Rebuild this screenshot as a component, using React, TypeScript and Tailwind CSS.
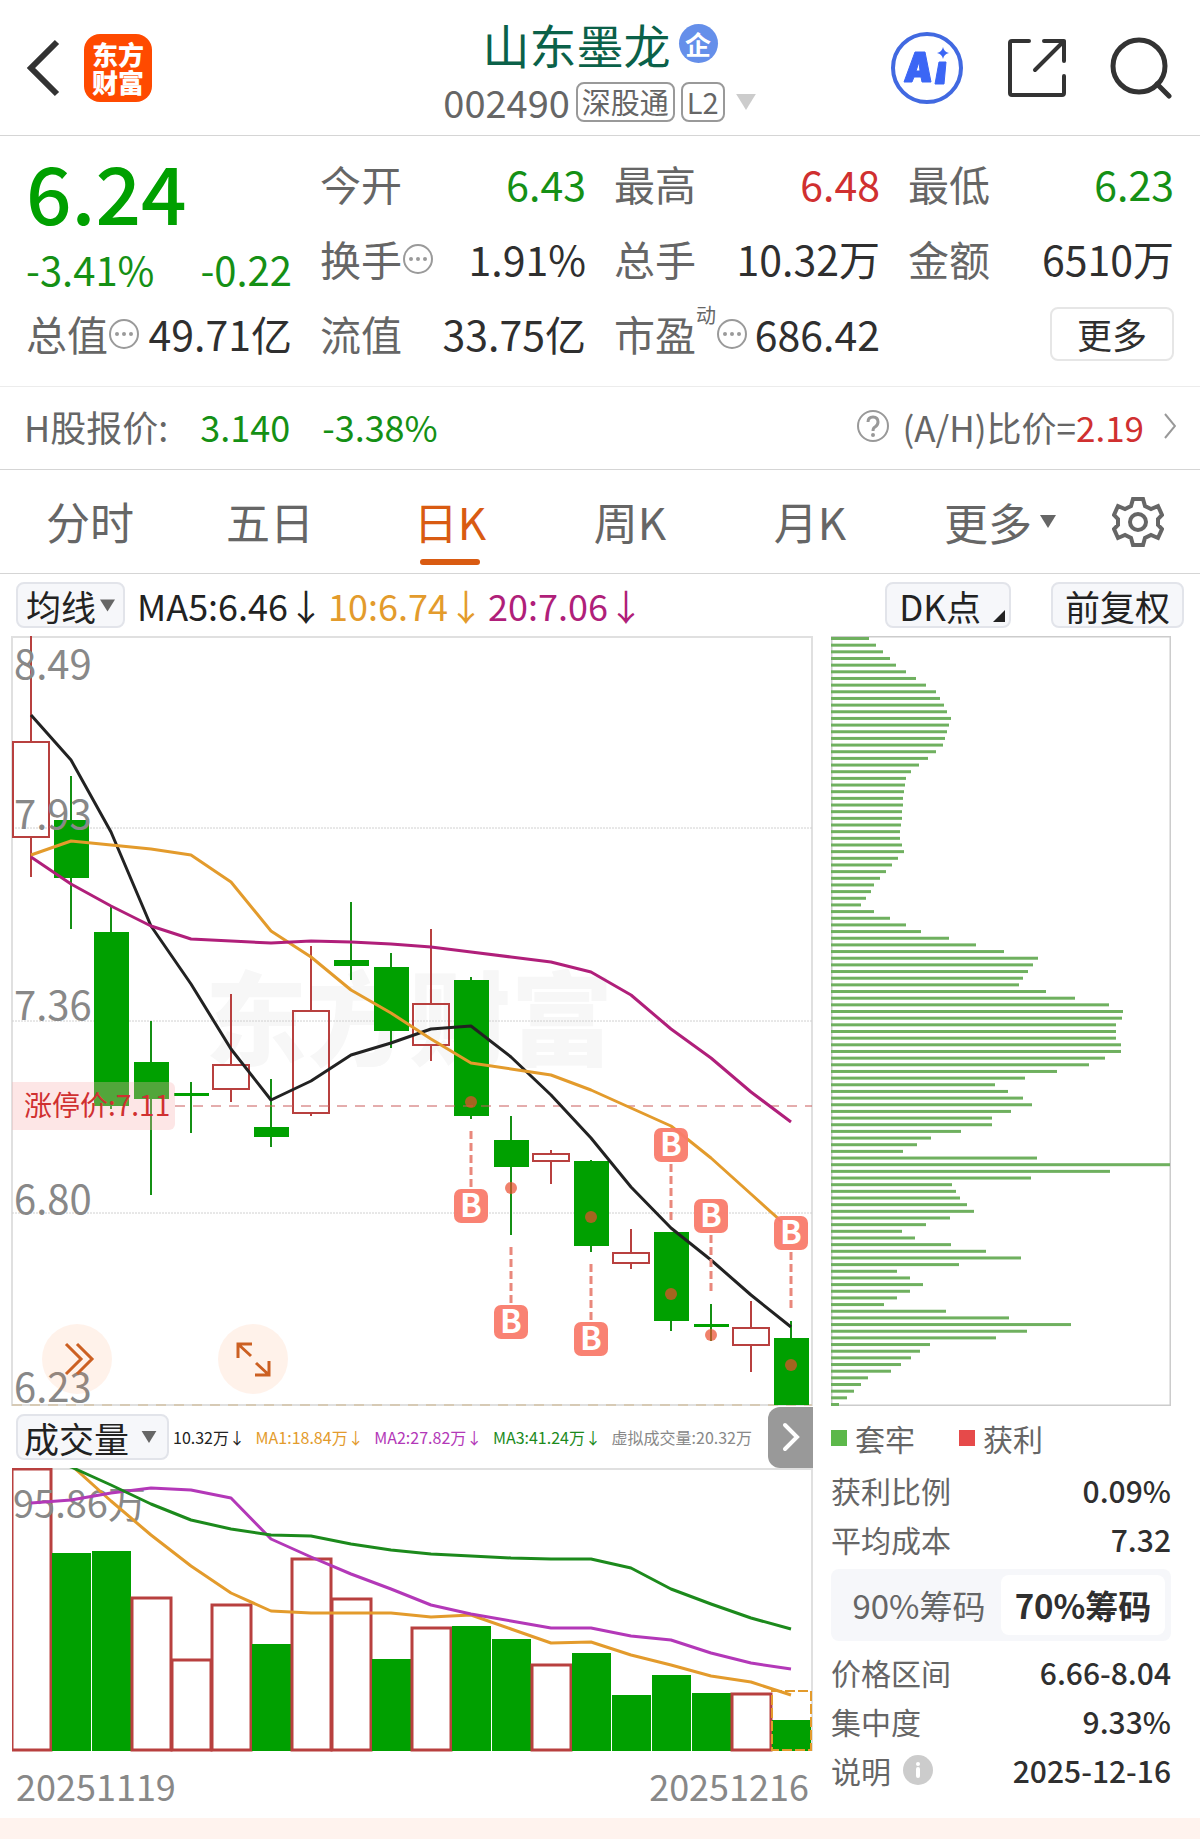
import React, { useState } from 'react';

const STEP = 40;
const FIRST = 19;

const cx = (index: number) => FIRST + index * STEP;

const toPoints = (values: number[]) => values.map((y, index) => `${cx(index)},${y}`).join(' ');

// [up, high, bodyTop, bodyBottom, low]
const candles: [boolean, number, number, number, number][] = [
  [true, 0, 106, 201, 241],
  [false, 140, 184, 242, 293],
  [false, 271, 296, 470, 473],
  [false, 385, 426, 463, 559],
  [false, 446, 457, 460, 497],
  [true, 358, 429, 453, 466],
  [false, 443, 491, 501, 511],
  [true, 310, 375, 477, 480],
  [false, 266, 324, 330, 344],
  [false, 317, 331, 395, 412],
  [true, 293, 368, 409, 425],
  [false, 341, 344, 480, 483],
  [false, 480, 504, 531, 599],
  [true, 514, 518, 525, 548],
  [false, 524, 525, 610, 616],
  [true, 593, 617, 627, 633],
  [false, 596, 596, 685, 695],
  [false, 668, 688, 691, 705],
  [true, 665, 692, 709, 736],
  [false, 685, 702, 769, 769],
];

const ma5 = [79, 124, 196, 290, 348, 413, 464, 445, 419, 407, 393, 390, 421, 459, 502, 551, 592, 624, 659, 691];
const ma10 = [219, 205, 209, 213, 219, 246, 295, 321, 354, 377, 403, 427, 433, 439, 454, 472, 490, 522, 558, 594];
const ma20 = [221, 248, 270, 290, 303, 305, 307, 305, 306, 308, 311, 316, 321, 326, 336, 359, 393, 422, 456, 486];

// [candle, badge centre, dash start, dash end, dot]
const buyMarks = [
  [11, 570, 495, 551, 466],
  [12, 686, 611, 667, 552],
  [14, 703, 628, 684, 581],
  [16, 509, 528, 584, 658],
  [17, 580, 599, 655, 699],
  [19, 597, 616, 672, 729],
];

const priceLabels = [
  { text: '8.49', y: 43 },
  { text: '7.93', y: 193 },
  { text: '7.36', y: 384 },
  { text: '6.80', y: 578 },
  { text: '6.23', y: 766 },
];

// [up, top]
const volumes: [boolean, number][] = [
  [true, 1], [false, 85], [false, 83], [true, 130], [true, 192],
  [true, 137], [false, 176], [true, 91], [true, 131], [false, 191],
  [true, 160], [false, 158], [false, 171], [true, 197], [false, 185],
  [false, 227], [false, 207], [false, 225], [true, 226], [false, 252],
];

const volMa1 = [-40, -3, 33, 67, 98, 125, 143, 145, 145, 145, 149, 147, 161, 175, 174, 187, 197, 208, 214, 227];
const volMa2 = [35, 32, 25, 20, 22, 30, 71, 89, 106, 121, 137, 146, 153, 160, 160, 168, 172, 185, 195, 201];
const volMa3 = [-14, -1, 17, 36, 52, 61, 67, 68, 76, 82, 86, 88, 90, 91, 91, 100, 121, 136, 150, 161];

const chips = [
  38, 45, 52, 59, 65, 75, 85, 95, 105, 109, 113, 116, 120, 118, 116, 114, 112, 105, 97, 88,
  80, 75, 74, 73, 72, 72, 71, 71, 70, 69, 69, 71, 73, 67, 61, 55, 49, 43, 40, 35,
  30, 43, 59, 75, 90, 118, 145, 173, 207, 202, 197, 192, 188, 215, 244, 278, 292, 291, 285, 285,
  285, 290, 290, 274, 258, 226, 194, 164, 177, 192, 201, 180, 161, 161, 130, 100, 86, 72, 206, 339,
  279, 200, 121, 125, 129, 136, 143, 119, 95, 71, 84, 120, 155, 190, 128, 66, 79, 92, 79, 66,
  53, 115, 178, 240, 196, 165, 99, 89, 80, 70, 60, 37, 30, 23, 16, 8,
];

const MoreDots = () => (
  <svg viewBox="0 0 32 32" className="w-8 h-8 shrink-0" fill="none">
    <circle cx="16" cy="16" r="14" stroke="#9a9a9a" strokeWidth="2" />
    <circle cx="9" cy="16" r="2" fill="#9a9a9a" />
    <circle cx="16" cy="16" r="2" fill="#9a9a9a" />
    <circle cx="23" cy="16" r="2" fill="#9a9a9a" />
  </svg>
);

const Triangle = ({ className }: { className: string }) => (
  <svg viewBox="0 0 16 13" className={className} fill="currentColor">
    <path d="M0 0h16L8 13z" />
  </svg>
);

type StatProps = {
  label: string;
  value: string;
  color?: string;
  dots?: boolean;
  sup?: string;
};

const Stat = ({ label, value, color = 'text-[#2f2f2f]', dots, sup }: StatProps) => (
  <div className="flex items-center justify-between h-[75px] whitespace-nowrap">
    <dt className="flex items-center text-[#666]">
      {label}
      {sup && <sup className="text-xl leading-none self-start -top-2">{sup}</sup>}
      {dots && <MoreDots />}
    </dt>
    <dd className={color}>{value}</dd>
  </div>
);

const Header = () => (
  <header className="flex items-center justify-between h-[136px] px-6 border-b border-[#d5d5d5]">
    <div className="flex items-center gap-6 w-[300px]">
      <button aria-label="返回">
        <svg viewBox="0 0 36 60" className="w-9 h-[60px]" fill="none" stroke="#333" strokeWidth="6">
          <path d="M33 4L7 30L33 56" />
        </svg>
      </button>
      <div className="w-[68px] h-[68px] px-2 py-[6px] rounded-2xl bg-[#ff4a00] text-white text-[26px] text-center font-black leading-7">
        东方财富
      </div>
    </div>

    <div className="flex flex-col items-center pt-2">
      <h1 className="flex items-center gap-2 h-[60px] text-[47px] leading-none text-[#0b6149]">
        山东墨龙
        <span className="flex items-center justify-center w-[39px] h-[39px] rounded-full bg-[#658fea] text-white text-[26px] font-bold leading-none">
          企
        </span>
      </h1>
      <button className="flex items-center gap-[6px] h-14 text-[38px] leading-none text-[#666]">
        002490
        <span className="flex items-center h-10 px-1 border-2 border-[#999] rounded-lg text-[29px] leading-none">深股通</span>
        <span className="flex items-center h-10 px-1 border-2 border-[#999] rounded-lg text-[29px] leading-none">L2</span>
        <Triangle className="w-[22px] h-4 ml-1 text-[#ccc]" />
      </button>
    </div>

    <div className="flex items-center justify-end gap-[42px] w-[300px] pr-1">
      <button aria-label="Ai">
        <svg viewBox="0 0 74 74" className="w-[74px] h-[74px]">
          <circle cx="37" cy="37" r="34" fill="none" stroke="#4169e1" strokeWidth="4" />
          <path
            fillRule="evenodd"
            d="M25 21h10l6 30h-9l-1-5h-7l-2 5h-8zM26 40h4l-1-9z"
            fill="#3b66f5"
            stroke="#3b66f5"
            strokeWidth="1"
            strokeLinejoin="round"
          />
          <path d="M49 31h7l-2 22h-9z" fill="#3b66f5" stroke="#3b66f5" strokeWidth="1" strokeLinejoin="round" />
          <path d="M53 16q1 5 6 6q-5 1-6 6q-1-5-6-6q5-1 6-6z" fill="#3b66f5" />
        </svg>
      </button>
      <button aria-label="分享">
        <svg viewBox="0 0 62 62" className="w-[62px] h-[62px]" fill="none" stroke="#333" strokeWidth="4" strokeLinecap="round" strokeLinejoin="round">
          <path d="M23 4H6a2 2 0 0 0-2 2v50a2 2 0 0 0 2 2h50a2 2 0 0 0 2-2V39" />
          <path d="M38 4h20v20M58 4L29 33" />
        </svg>
      </button>
      <button aria-label="搜索">
        <svg viewBox="0 0 62 62" className="w-[62px] h-[62px]" fill="none" stroke="#333" strokeWidth="5" strokeLinecap="round">
          <circle cx="29" cy="29" r="26" />
          <path d="M47 47L59 59" />
        </svg>
      </button>
    </div>
  </header>
);

const Quote = () => (
  <section className="grid grid-cols-4 gap-x-7 px-[26px] pt-[10px] pb-[15px] text-[41px] leading-none border-b border-[#ececec]">
    <div>
      <div className="flex flex-col justify-between h-[150px] pt-1 text-[#159015] whitespace-nowrap">
        <strong className="text-[80px] leading-[80px] font-medium text-[#00a000]">6.24</strong>
        <div className="flex items-center justify-between h-[54px] text-[40px] leading-none">
          <span>-3.41%</span>
          <span>-0.22</span>
        </div>
      </div>
      <dl>
        <Stat label="总值" value="49.71亿" dots />
      </dl>
    </div>
    <dl>
      <Stat label="今开" value="6.43" color="text-[#159015]" />
      <Stat label="换手" value="1.91%" dots />
      <Stat label="流值" value="33.75亿" />
    </dl>
    <dl>
      <Stat label="最高" value="6.48" color="text-[#d03030]" />
      <Stat label="总手" value="10.32万" />
      <Stat label="市盈" value="686.42" sup="动" dots />
    </dl>
    <div>
      <dl>
        <Stat label="最低" value="6.23" color="text-[#159015]" />
        <Stat label="金额" value="6510万" />
      </dl>
      <div className="flex items-center justify-end h-[75px]">
        <button className="w-[124px] h-[54px] border-2 border-[#e6e6e6] rounded-lg text-[35px] leading-none text-[#2f2f2f]">更多</button>
      </div>
    </div>
  </section>
);

const HShare = () => (
  <section className="flex items-center justify-between h-[83px] pb-1 pl-6 pr-6 border-b border-[#d5d5d5] text-[35px] leading-none text-[#666] whitespace-nowrap">
    <div className="flex items-center gap-8 text-[36px] leading-none">
      <span>H股报价:</span>
      <span className="text-[#159015]">3.140</span>
      <span className="text-[#159015]">-3.38%</span>
    </div>
    <button className="flex items-center">
      <svg viewBox="0 0 34 34" className="w-[34px] h-[34px] mr-3" fill="none" stroke="#999" strokeWidth="2">
        <circle cx="17" cy="17" r="15" />
        <path d="M12 13q0-5 5-5t5 5q0 3-3 5q-2 1-2 4" strokeWidth="3" />
        <circle cx="17" cy="26" r="1" />
      </svg>
      (A/H)比价=
      <span className="text-[#d03030]">2.19</span>
      <svg viewBox="0 0 12 26" className="w-3 h-[26px] ml-5" fill="none" stroke="#999" strokeWidth="2">
        <path d="M1 1l10 12L1 25" />
      </svg>
    </button>
  </section>
);

const tabs = ['分时', '五日', '日K', '周K', '月K'];

const Tabs = () => {
  const [active, setActive] = useState('日K');

  return (
    <nav className="grid grid-cols-[repeat(5,9fr)_10fr_5fr] h-[104px] border-b border-[#d5d5d5] text-[44px] leading-none text-[#666]">
      {tabs.map((tab) => (
        <button
          key={tab}
          onClick={() => setActive(tab)}
          className={`flex flex-col items-center justify-end pb-2 ${tab === active ? 'text-[#d95b12]' : ''}`}
        >
          <span>{tab}</span>
          <span className={`w-[60px] h-[6px] mt-4 rounded-full ${tab === active ? 'bg-[#d95b12]' : ''}`} />
        </button>
      ))}
      <button className="flex items-center justify-center gap-2">
        更多
        <Triangle className="w-4 h-[13px]" />
      </button>
      <button aria-label="设置" className="flex items-center justify-start pl-3">
        <svg viewBox="0 0 52 52" className="w-[52px] h-[52px]" fill="none" stroke="#666" strokeWidth="4">
          <path d="M21 3h10l2 7l6 3l7-3l4 9l-4 4v6l4 4l-4 9l-7-3l-6 3l-2 7H21l-2-7l-6-3l-7 3l-4-9l4-4v-6l-4-4l4-9l7 3l6-3z" />
          <circle cx="26" cy="26" r="8" />
        </svg>
      </button>
    </nav>
  );
};

const chip = 'flex items-center h-[46px] border-2 border-[#e2e4ea] rounded-lg bg-[#f6f7fa] text-[#222] text-[35px] leading-none';

const MaBar = () => (
  <div className="flex items-center justify-between h-[62px] pl-4 pr-4 text-[36px] leading-none whitespace-nowrap">
    <div className="flex items-center gap-1">
      <button className={`${chip} px-2 mr-2`}>
        均线
        <Triangle className="w-[15px] h-[13px] ml-1 text-[#666]" />
      </button>
      <span className="text-[#222]">MA5:6.46↓</span>
      <span className="text-[#e39b2c]">10:6.74↓</span>
      <span className="text-[#b01f7a]">20:7.06↓</span>
    </div>
    <div className="flex items-center gap-10">
      <button className={`${chip} pl-3 pr-1`}>
        DK点
        <svg viewBox="0 0 12 12" className="w-3 h-3 ml-3 mb-1 self-end" fill="#222">
          <path d="M12 0v12H0z" />
        </svg>
      </button>
      <button className={`${chip} px-3`}>前复权</button>
    </div>
  </div>
);

const KLine = () => (
  <div className="relative">
    <svg viewBox="0 0 801 770" className="block w-full h-auto overflow-visible">
      <text x="193" y="422" fontSize="102" fontWeight="900" fill="#f7f7f7">东方财富</text>
      <path d="M0 770V1H800V770" fill="none" stroke="#e0e0e0" strokeWidth="2" />
      {[192, 385, 577].map((y) => (
        <line key={y} x1="0" x2="800" y1={y} y2={y} stroke="#d0d0d0" strokeDasharray="2 1" />
      ))}
      <line x1="0" x2="800" y1="769" y2="769" stroke="#e0e0e0" strokeWidth="2" />
      <line x1="0" x2="800" y1="769" y2="769" stroke="#cdb48a" strokeDasharray="10 8" />

      {candles.map(([up, high, top, bottom, low], index) => (
        <g key={index} stroke={up ? '#b8403f' : '#149014'} strokeWidth="2">
          <line x1={cx(index)} x2={cx(index)} y1={high} y2={top} />
          <line x1={cx(index)} x2={cx(index)} y1={bottom} y2={low} />
          {up ? (
            <rect x={cx(index) - 18} y={top} width="36" height={bottom - top} fill="none" />
          ) : (
            <rect x={cx(index) - 17} y={top} width="35" height={bottom - top} fill="#00a000" stroke="none" />
          )}
        </g>
      ))}

      <line x1="163" x2="800" y1="470" y2="470" stroke="#c95a5a" strokeWidth="1" strokeDasharray="10 8" />

      <g fill="none" strokeWidth="3" strokeLinejoin="round">
        <polyline points={toPoints(ma5)} stroke="#222" />
        <polyline points={toPoints(ma10)} stroke="#e39b2c" />
        <polyline points={toPoints(ma20)} stroke="#b01f7a" />
      </g>

      {buyMarks.map(([index, badge, from, to, dot]) => (
        <g key={index}>
          <line x1={cx(index)} x2={cx(index)} y1={from} y2={to} stroke="#e9887c" strokeWidth="3" strokeDasharray="8 4" />
          <circle cx={cx(index)} cy={dot} r="6" fill="#ea4b2c" fillOpacity="0.7" />
          <rect x={cx(index) - 17} y={badge - 17} width="34" height="34" rx="7" fill="#f97b6b" fillOpacity="0.95" />
          <text x={cx(index)} y={badge + 11} textAnchor="middle" fontSize="32" fontWeight="700" fill="#fff">B</text>
        </g>
      ))}

      <path d="M0 446h157a6 6 0 0 1 6 6v36a6 6 0 0 1-6 6H0z" fill="#f9b4b4" fillOpacity="0.33" />
      <text x="12" y="480" fontSize="28" fill="#d03030">涨停价:7.11</text>
      {priceLabels.map(({ text, y }) => (
        <text key={text} x="2" y={y} fontSize="40" fill="#888">{text}</text>
      ))}
    </svg>

    <button aria-label="展开" className="absolute bottom-3 left-[30px] w-[70px] h-[70px] rounded-full bg-[#ff7a30]/10">
      <svg viewBox="0 0 70 70" fill="none" stroke="#cc6022" strokeWidth="3">
        <path d="M24 20l15 15l-15 15M35 20l15 15l-15 15" />
      </svg>
    </button>
    <button aria-label="全屏" className="absolute bottom-3 left-[206px] w-[70px] h-[70px] rounded-full bg-[#ff7a30]/10">
      <svg viewBox="0 0 70 70" fill="none" stroke="#cc6022" strokeWidth="3">
        <path d="M20 34V20h14M20 20l13 12M51 37v14H37M51 51L38 39" />
      </svg>
    </button>
  </div>
);

const VolumeBar = () => (
  <div className="flex items-center h-[62px]">
    <button className={`${chip} shrink-0 ml-1 px-[6px]`}>
      成交量
      <Triangle className="w-4 h-3 ml-3 mr-1 text-[#666]" />
    </button>
    <div className="flex flex-1 items-center justify-between min-w-0 pl-1 pr-4 text-base leading-none whitespace-nowrap">
      <span className="text-[#222]">10.32万↓</span>
      <span className="text-[#e39b2c]">MA1:18.84万↓</span>
      <span className="text-[#b338b8]">MA2:27.82万↓</span>
      <span className="text-[#1c8a1c]">MA3:41.24万↓</span>
      <span className="text-[#888]">虚拟成交量:20.32万</span>
    </div>
    <button aria-label="更多指标" className="flex items-center justify-center shrink-0 w-[45px] h-[61px] rounded-l-xl bg-[#999]">
      <svg viewBox="0 0 18 30" className="w-[18px] h-[30px]" fill="none" stroke="#fff" strokeWidth="4" strokeLinecap="round">
        <path d="M3 3l12 12L3 27" />
      </svg>
    </button>
  </div>
);

const VolumeChart = () => (
  <svg viewBox="0 0 801 284" className="block w-full h-auto">
    <path d="M0 1H800V283" fill="none" stroke="#e0e0e0" strokeWidth="2" />
    {volumes.map(([up, top], index) =>
      up ? (
        <rect key={index} x={index * STEP} y={top} width="39" height={282 - top} fill="none" stroke="#b8403f" strokeWidth="3" />
      ) : (
        <rect key={index} x={index * STEP} y={top} width="39" height={283 - top} fill="#00a000" />
      )
    )}
    <rect x="760" y="223" width="39" height="59" fill="none" stroke="#e39b2c" strokeWidth="2" strokeDasharray="10 3" />
    <text x="1" y="50" fontSize="38" fill="#888">95.86万</text>
    <g fill="none" strokeWidth="3" strokeLinejoin="round">
      <polyline points={toPoints(volMa1)} stroke="#e39b2c" />
      <polyline points={toPoints(volMa2)} stroke="#b338b8" />
      <polyline points={toPoints(volMa3)} stroke="#1c8a1c" />
    </g>
  </svg>
);

const ChipChart = () => (
  <svg viewBox="0 0 340 770" className="block w-full h-auto">
    <path d="M0 0H340V770H0z" fill="none" stroke="#ccc" strokeWidth="3" />
    {chips.map((width, index) => (
      <rect key={index} x="0" y={1 + (index * 766) / 115} width={width} height="3" fill="#6fb05f" />
    ))}
  </svg>
);

const ChipRow = ({ label, value, info }: { label: string; value: string; info?: boolean }) => (
  <div className="flex items-center justify-between h-[49px] whitespace-nowrap">
    <dt className="flex items-center gap-3 text-[#666]">
      {label}
      {info && (
        <svg viewBox="0 0 30 30" className="w-[30px] h-[30px]">
          <circle cx="15" cy="15" r="15" fill="#ccc" />
          <circle cx="15" cy="9" r="2" fill="#fff" />
          <path d="M15 14v7" stroke="#fff" strokeWidth="4" strokeLinecap="round" />
        </svg>
      )}
    </dt>
    <dd className="font-medium text-[#2f2f2f]">{value}</dd>
  </div>
);

const ChipPanel = () => {
  const [range, setRange] = useState('70%筹码');

  return (
    <div className="text-[30px] leading-none">
      <div className="flex items-center h-[59px] pt-1 text-[#666]">
        <span className="w-4 h-4 mr-2 bg-[#5cb84a]" />
        套牢
        <span className="w-4 h-4 ml-11 mr-2 bg-[#e64a4a]" />
        获利
      </div>
      <dl>
        <ChipRow label="获利比例" value="0.09%" />
        <ChipRow label="平均成本" value="7.32" />
      </dl>
      <div className="flex my-[6px] p-[6px] h-[72px] rounded-lg bg-[#f6f7fa] text-[33px] leading-none whitespace-nowrap">
        {['90%筹码', '70%筹码'].map((item) => (
          <button
            key={item}
            onClick={() => setRange(item)}
            className={`flex-1 rounded-lg ${item === range ? 'bg-white font-bold text-[#2f2f2f]' : 'text-[#666]'}`}
          >
            {item}
          </button>
        ))}
      </div>
      <dl>
        <ChipRow label="价格区间" value="6.66-8.04" />
        <ChipRow label="集中度" value="9.33%" />
        <ChipRow label="说明" value="2025-12-16" info />
      </dl>
    </div>
  );
};

const App = () => {
  return (
    <div className="min-h-screen bg-white font-['Noto_Sans_CJK_SC',sans-serif]">
      <Header />
      <Quote />
      <HShare />
      <Tabs />
      <MaBar />
      <main className="grid grid-cols-[minmax(0,801fr)_minmax(0,340fr)] gap-[18px] pl-3 pr-[29px]">
        <div>
          <KLine />
          <VolumeBar />
          <VolumeChart />
          <div className="flex items-center justify-between h-[66px] px-1 text-4xl leading-none text-[#888]">
            <span>20251119</span>
            <span>20251216</span>
          </div>
        </div>
        <div>
          <ChipChart />
          <ChipPanel />
        </div>
      </main>
      <footer className="h-[21px] bg-[#fff3ee]" />
    </div>
  );
};

export default App;
